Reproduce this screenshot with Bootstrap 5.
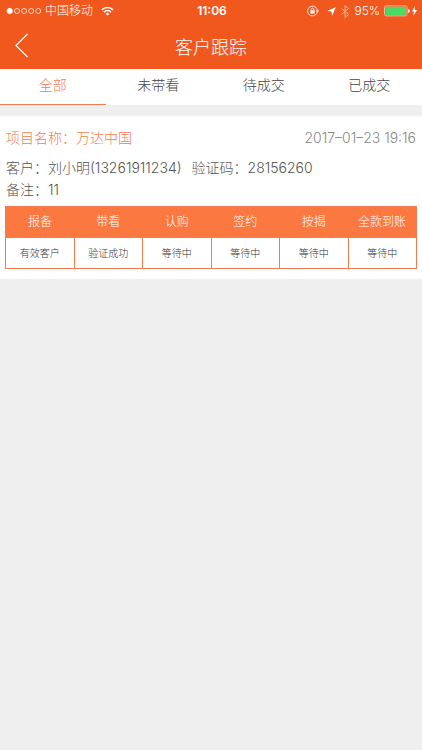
<!DOCTYPE html>
<html lang="zh-CN">
<head>
<meta charset="utf-8">
<meta name="viewport" content="width=device-width, initial-scale=1">
<title>客户跟踪</title>
<link href="https://cdn.jsdelivr.net/npm/bootstrap@5.3.0/dist/css/bootstrap.min.css" rel="stylesheet">
<style>
body{background:#efefef;color:#555;font-family:Inter,"Noto Sans CJK SC",sans-serif;font-size:14px;font-weight:300;line-height:22px}
.app-top{background:#f0581e;color:#fff}
.status-bar{height:20px;font-size:12px;line-height:20px;padding:2px 4px 0 6px}
.status-side{flex:1 1 0}
.clock{font-weight:600}
.title-bar{height:49px;padding:0 12px}
.title-bar h1{font-size:18px;line-height:26px;font-weight:300;padding-top:6px}
.title-side{width:20px}
.back-btn{line-height:0}
.tab-strip .nav-link{color:#444;border-radius:0;border-bottom:1px solid #fff;padding:5px 0 8px;line-height:22px}
.tab-strip .nav-link.active{color:#f47c50;border-bottom-color:#f47c50;background:#fff}
.record{margin-top:11px;padding:11px 5px 10px}
.record-text{padding:0 1px}
.project{color:#f47c50}
.stamp{color:#888}
.details{margin-top:8px;margin-bottom:5px}
.phone{margin-right:10px}
.steps{table-layout:fixed;border:1px solid #f47c50;line-height:18px}
.steps th{background:#fb7840;color:#fff;font-size:12px;font-weight:300;padding:6px 0}
.steps td{font-size:10px;font-weight:300;color:#333;border:1px solid #f47c50;padding:6px 0}
</style>
</head>
<body>
<header class="app-top">
  <div class="status-bar d-flex align-items-center">
    <div class="status-side d-flex align-items-center">
      <svg width="35" height="8" viewBox="0 0 35 8" fill="none" stroke="#fff" stroke-width=".7" aria-hidden="true"><circle cx="3.700" cy="4" r="2.700" fill="#fff"/><circle cx="11" cy="4" r="2.500"/><circle cx="18.100" cy="4" r="2.500"/><circle cx="25.200" cy="4" r="2.500"/><circle cx="32.200" cy="4" r="2.500"/></svg>
      <span class="ms-1">中国移动</span>
      <svg class="ms-2" width="13" height="10" viewBox="0 0 13 10" fill="none" stroke="#fff" stroke-width="1.700" aria-hidden="true"><path d="M.9 3.800a8 8 0 0 1 11.200 0M3 6.100a5 5 0 0 1 7 0"/><path d="M6.500 9.600 4.600 7.700a2.700 2.700 0 0 1 3.800 0z" fill="#fff" stroke="none"/></svg>
    </div>
    <span class="clock">11:06</span>
    <div class="status-side d-flex align-items-center justify-content-end">
      <svg width="12" height="12" viewBox="0 0 12 12" fill="none" stroke="#fff" aria-hidden="true"><path d="M10.400 6A4.900 4.900 0 1 1 8.600 2.200M10.400 6a4.900 4.900 0 0 0-1.800-3.800" stroke-width=".8"/><path d="m9 5.600 1.500 1.900L12 5.600z" fill="#fff" stroke="none"/><rect x="3.400" y="5.200" width="4.200" height="3.300" fill="#fff" stroke="none"/><path d="M4.200 5.300V4.400a1.300 1.300 0 0 1 2.600 0v.9" stroke-width=".8"/></svg>
      <svg class="ms-2" width="9" height="9" viewBox="0 0 9 9" fill="#fff" aria-hidden="true"><path d="M8.800.2 5.100 8.800 4.600 4.400.2 3.900z"/></svg>
      <svg class="ms-1" width="10" height="13" viewBox="0 0 10 13" fill="none" stroke="#fbb899" stroke-width=".9" aria-hidden="true"><path d="m1.500 3.600 7 6L5 12.600V.6l3.500 3-7 6"/></svg>
      <span class="ms-1">95%</span>
      <svg class="ms-1" width="34" height="12" viewBox="0 0 34 12" aria-hidden="true"><rect x=".5" y=".9" width="22.500" height="10" rx="1.500" fill="none" stroke="#f9b495"/><rect x="1.300" y="1.700" width="20.700" height="8.400" rx=".8" fill="#4cd964"/><path d="M24 4.200a1.800 1.800 0 0 1 0 3.600z" fill="#fff"/><path d="m31.300 1-3.500 5.600h2.300l-1 4.400 4-5.900h-2.500z" fill="#fff"/></svg>
    </div>
  </div>
  <div class="title-bar d-flex align-items-center justify-content-between">
    <button type="button" class="back-btn title-side btn p-0 border-0" aria-label="返回"><svg width="18" height="26" viewBox="0 0 18 26" fill="none" stroke="#fff" stroke-width="1.200"><path d="M14.500 2 3 13.500 14.500 25"/></svg></button>
    <h1 class="m-0">客户跟踪</h1>
    <span class="title-side"></span>
  </div>
</header>
<nav class="tab-strip nav nav-justified bg-white flex-nowrap">
  <a class="nav-link active" href="#" aria-current="page">全部</a>
  <a class="nav-link" href="#">未带看</a>
  <a class="nav-link" href="#">待成交</a>
  <a class="nav-link" href="#">已成交</a>
</nav>
<main class="record bg-white">
  <div class="record-text d-flex justify-content-between">
    <span class="project">项目名称：万达中国</span>
    <time class="stamp" datetime="2017-01-23T19:16">2017–01–23 19:16</time>
  </div>
  <div class="record-text details">
    <div><span class="phone">客户：刘小明(13261911234)</span>验证码：28156260</div>
    <div>备注：11</div>
  </div>
  <table class="steps w-100 text-center">
    <thead><tr><th scope="col">报备</th><th scope="col">带看</th><th scope="col">认购</th><th scope="col">签约</th><th scope="col">按揭</th><th scope="col">全款到账</th></tr></thead>
    <tbody><tr><td>有效客户</td><td>验证成功</td><td>等待中</td><td>等待中</td><td>等待中</td><td>等待中</td></tr></tbody>
  </table>
</main>
<script src="https://cdn.jsdelivr.net/npm/bootstrap@5.3.0/dist/js/bootstrap.bundle.min.js"></script>
</body>
</html>
